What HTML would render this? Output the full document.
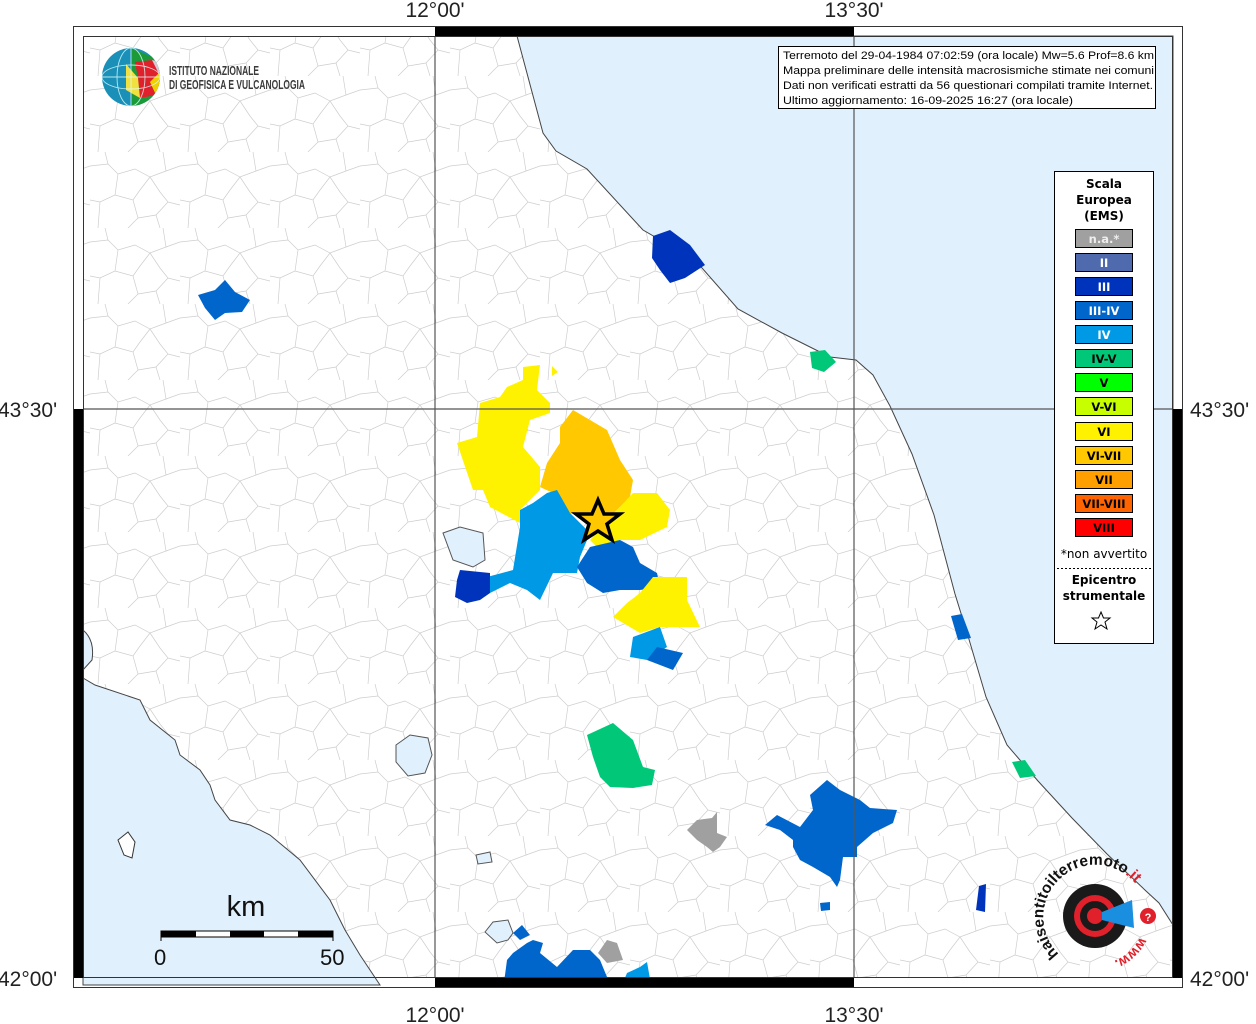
<!DOCTYPE html>
<html><head><meta charset="utf-8"><style>
html,body{margin:0;padding:0;background:#fff;width:1256px;height:1024px;overflow:hidden}
svg{display:block}
.dv{font-family:"DejaVu Sans","Liberation Sans",sans-serif}
.ls{font-family:"Liberation Sans",sans-serif}
</style></head><body>
<svg width="1256" height="1024" viewBox="0 0 1256 1024" xmlns="http://www.w3.org/2000/svg">
<defs>
<pattern id="mun" width="90" height="76" patternUnits="userSpaceOnUse">
<path d="M0 14 L18 12 L28 22 L45 17 L60 25 L76 19 L90 14 M28 22 L25 43 L10 50 L0 48 M25 43 L43 48 L50 38 L60 25 M43 48 L48 66 L38 76 M48 66 L66 63 L78 50 L90 53 M60 25 L70 40 L78 50 M18 12 L15 0 M76 19 L73 0 M10 50 L8 76 M66 63 L70 76" fill="none" stroke="#cdcdcd" stroke-width="0.7"/>
</pattern>
<clipPath id="c"><rect x="73" y="26" width="1110" height="962"/></clipPath>
</defs>
<rect x="73" y="26" width="1110" height="962" fill="#fff"/>
<g clip-path="url(#c)">
<rect x="83" y="36" width="1090" height="942" fill="url(#mun)"/>
<path d="M517 36 L543 133 L556 151 L587 169 L643 230 L695 260 L738 309 L782 333 L830 357 L856 360 L873 375 L890 406 L912 454 L934 515 L955 594 L968 636 L986 697 L1007 745 L1038 781 L1072 818 L1107 854 L1146 891 L1159 903 L1173 925 L1173 36 Z" fill="#e0f0fc" stroke="#444" stroke-width="1"/>
<path d="M83 678 L95 685 L140 700 L150 720 L175 740 L180 755 L200 770 L210 785 L215 800 L230 820 L250 825 L270 835 L300 860 L330 900 L345 930 L360 955 L380 985 L83 985 Z" fill="#e0f0fc" stroke="#444" stroke-width="1"/>
<path d="M83 630 Q95 640 92 660 L83 670Z" fill="#e0f0fc" stroke="#444"/>
<path d="M118 840 L128 832 L135 842 L132 858 L124 855 Z" fill="#fff" stroke="#333"/>
<path d="M396 745 L410 735 L428 738 L432 755 L425 773 L408 776 L396 762 Z" fill="#e0f0fc" stroke="#555"/>
<path d="M443 533 L460 527 L483 533 L485 560 L473 567 L453 560 Z" fill="#e0f0fc" stroke="#555"/>
<path d="M485 932 L493 922 L508 920 L513 933 L508 940 L497 943 Z" fill="#e0f0fc" stroke="#555"/>
<path d="M476 855 L490 852 L492 862 L478 864Z" fill="#e0f0fc" stroke="#555"/>
<path d="M523 367 L540 365 L537 390 L550 403 L550 413 L530 420 L523 447 L540 467 L540 490 L520 510 L520 523 L490 507 L483 490 L473 490 L457 443 L477 437 L480 403 L500 397 L507 387 L523 380 Z M552 366 L558 372 L552 376Z" fill="#fff200"/>
<path d="M573 410 L607 430 L620 460 L633 480 L630 497 L620 507 L610 517 L597 517 L567 513 L553 493 L540 487 L547 463 L560 443 L560 427 Z" fill="#ffc800"/>
<path d="M633 493 L657 493 L670 510 L667 527 L640 540 L620 540 L600 550 L590 540 L610 517 L620 507 Z" fill="#fff200"/>
<path d="M557 490 L570 513 L590 533 L580 557 L577 573 L553 573 L540 600 L527 590 L510 583 L490 593 L487 577 L513 570 L520 527 L520 510 L533 503 L547 493 Z" fill="#0099e6"/>
<path d="M590 547 L620 540 L633 547 L640 563 L657 573 L660 587 L640 590 L620 590 L603 593 L587 583 L577 567 Z" fill="#0066cc"/>
<path d="M460 570 L490 573 L490 593 L480 600 L467 603 L455 597 L457 580 Z" fill="#0033bb"/>
<path d="M653 577 L687 577 L687 600 L700 627 L660 627 L640 633 L613 617 L627 603 L640 593 Z" fill="#fff200"/>
<path d="M633 637 L660 627 L667 647 L647 660 L630 657 Z" fill="#0099e6"/>
<path d="M657 647 L683 653 L673 670 L647 660 Z" fill="#0066cc"/>
<path d="M653 236 L670 230 L690 245 L705 265 L685 278 L670 283 L660 270 L652 258 Z" fill="#0033bb"/>
<path d="M810 352 L825 350 L836 362 L824 372 L812 368 Z" fill="#00c878"/>
<path d="M951 616 L962 614 L971 638 L958 640 Z" fill="#0066cc"/>
<path d="M1012 762 L1025 760 L1036 776 L1020 778 Z" fill="#00c878"/>
<path d="M979 886 L986 884 L985 912 L976 910 Z" fill="#0033bb"/>
<path d="M198 295 L215 290 L225 280 L235 292 L250 300 L242 312 L225 313 L215 320 L205 308 Z" fill="#0066cc"/>
<path d="M587 735 L613 723 L633 740 L643 767 L655 770 L652 785 L633 788 L610 787 L600 777 L593 757 Z" fill="#00c878"/>
<path d="M687 830 L697 820 L712 818 L717 812 L717 833 L727 837 L720 847 L713 852 L707 847 L697 840 Z" fill="#a0a0a0"/>
<path d="M765 825 L777 815 L800 827 L813 810 L810 795 L827 780 L840 790 L860 800 L870 808 L897 810 L893 823 L873 833 L857 847 L857 857 L843 857 L840 880 L837 887 L830 877 L813 867 L800 860 L793 847 L793 840 L780 830 Z" fill="#0066cc"/>
<path d="M820 903 L830 902 L830 910 L821 911Z" fill="#0066cc"/>
<path d="M503 990 L507 960 L513 953 L527 943 L533 940 L543 943 L540 953 L557 967 L573 950 L590 950 L600 960 L607 977 L607 990 Z M513 933 L522 925 L530 935 L520 940Z" fill="#0066cc"/>
<path d="M598 953 L607 940 L617 943 L623 960 L607 963 Z" fill="#a0a0a0"/>
<path d="M620 990 L627 973 L640 967 L647 962 L652 990 Z" fill="#0099e6"/>
<path d="M598 500 L604 514 L620 514 L607 524 L612 540 L598 531 L584 540 L589 524 L576 514 L592 514 Z" fill="#ffc800" stroke="#000" stroke-width="3.5"/>
</g>
<g stroke="#555" stroke-width="1.2">
<line x1="435" y1="36" x2="435" y2="978"/><line x1="854" y1="36" x2="854" y2="978"/>
<line x1="83" y1="409" x2="1173" y2="409"/>
</g>
<rect x="435" y="26" width="419" height="10" fill="#000"/>
<rect x="435" y="978" width="419" height="10" fill="#000"/>
<rect x="73" y="409" width="10" height="569" fill="#000"/>
<rect x="1173" y="409" width="10" height="569" fill="#000"/>
<rect x="73.5" y="26.5" width="1109" height="961" fill="none" stroke="#333"/>
<rect x="83.5" y="36.5" width="1089" height="941" fill="none" stroke="#333"/>
<g class="ls" font-size="21" fill="#222">
<text x="435" y="17" text-anchor="middle">12°00'</text>
<text x="854" y="17" text-anchor="middle">13°30'</text>
<text x="435" y="1022" text-anchor="middle">12°00'</text>
<text x="854" y="1022" text-anchor="middle">13°30'</text>
<text x="-2" y="417">43°30'</text>
<text x="1190" y="417">43°30'</text>
<text x="-2" y="986">42°00'</text>
<text x="1190" y="986">42°00'</text>
</g>
<rect x="778.5" y="46.5" width="377" height="62" fill="#fff" stroke="#000"/>
<g class="ls" font-size="11.2" fill="#000">
<text x="783" y="59" textLength="371" lengthAdjust="spacingAndGlyphs">Terremoto del 29-04-1984 07:02:59 (ora locale) Mw=5.6 Prof=8.6 km</text>
<text x="783" y="74" textLength="371" lengthAdjust="spacingAndGlyphs">Mappa preliminare delle intensità macrosismiche stimate nei comuni</text>
<text x="783" y="89" textLength="370" lengthAdjust="spacingAndGlyphs">Dati non verificati estratti da 56 questionari compilati tramite Internet.</text>
<text x="783" y="104" textLength="290" lengthAdjust="spacingAndGlyphs">Ultimo aggiornamento: 16-09-2025 16:27 (ora locale)</text>
</g>
<rect x="1054.5" y="171.5" width="99" height="472" fill="#fff" stroke="#000"/>
<g class="dv" font-size="12" font-weight="bold" text-anchor="middle" fill="#000">
<text x="1104" y="188">Scala</text><text x="1104" y="204">Europea</text><text x="1104" y="220">(EMS)</text>
</g>
<g stroke="#000" stroke-width="1">
<rect x="1075.5" y="229.5" width="57" height="18" fill="#a0a0a0"/>
<rect x="1075.5" y="253.5" width="57" height="18" fill="#4f6aad"/>
<rect x="1075.5" y="277.5" width="57" height="18" fill="#0033bb"/>
<rect x="1075.5" y="301.5" width="57" height="18" fill="#0066cc"/>
<rect x="1075.5" y="325.5" width="57" height="18" fill="#0099e6"/>
<rect x="1075.5" y="349.5" width="57" height="18" fill="#00c878"/>
<rect x="1075.5" y="373.5" width="57" height="18" fill="#00ff00"/>
<rect x="1075.5" y="397.5" width="57" height="18" fill="#c8ff00"/>
<rect x="1075.5" y="422.5" width="57" height="18" fill="#fff200"/>
<rect x="1075.5" y="446.5" width="57" height="18" fill="#ffc800"/>
<rect x="1075.5" y="470.5" width="57" height="18" fill="#ffa000"/>
<rect x="1075.5" y="494.5" width="57" height="18" fill="#ff6400"/>
<rect x="1075.5" y="518.5" width="57" height="18" fill="#ff0000"/>
</g>
<g class="dv" font-size="11.5" font-weight="bold" text-anchor="middle">
<text x="1104" y="243" fill="#eee">n.a.*</text>
<text x="1104" y="267" fill="#fff">II</text>
<text x="1104" y="291" fill="#fff">III</text>
<text x="1104" y="315" fill="#fff">III-IV</text>
<text x="1104" y="339" fill="#fff">IV</text>
<text x="1104" y="363" fill="#000">IV-V</text>
<text x="1104" y="387" fill="#000">V</text>
<text x="1104" y="411" fill="#000">V-VI</text>
<text x="1104" y="436" fill="#000">VI</text>
<text x="1104" y="460" fill="#000">VI-VII</text>
<text x="1104" y="484" fill="#000">VII</text>
<text x="1104" y="508" fill="#000">VII-VIII</text>
<text x="1104" y="532" fill="#000">VIII</text>
</g>
<text x="1104" y="558" class="dv" font-size="12" text-anchor="middle">*non avvertito</text>
<line x1="1057" y1="568.5" x2="1151" y2="568.5" stroke="#000" stroke-dasharray="2,2"/>
<g class="dv" font-size="12" font-weight="bold" text-anchor="middle"><text x="1104" y="584">Epicentro</text><text x="1104" y="600">strumentale</text></g>
<path d="M1101 612 L1103.5 618 L1110 618 L1105 622 L1107 629 L1101 625 L1095 629 L1097 622 L1092 618 L1098.5 618 Z" fill="#fff" stroke="#000" stroke-width="1"/>
<text x="246" y="916" class="ls" font-size="29" text-anchor="middle" fill="#111">km</text>
<rect x="161" y="931" width="172" height="6" fill="#fff" stroke="#000"/>
<rect x="161" y="931" width="35" height="6" fill="#000"/>
<rect x="230" y="931" width="34" height="6" fill="#000"/>
<rect x="298" y="931" width="35" height="6" fill="#000"/>
<line x1="161" y1="931" x2="161" y2="941" stroke="#000"/><line x1="333" y1="931" x2="333" y2="941" stroke="#000"/>
<g class="ls" font-size="22" fill="#111"><text x="154" y="965">0</text><text x="320" y="965">50</text></g>
<defs><clipPath id="g"><circle cx="131" cy="77" r="29"/></clipPath></defs>
<g clip-path="url(#g)">
<rect x="100" y="46" width="62" height="62" fill="#1a8fb8"/>
<path d="M131 48 L160 60 L162 108 L131 108 Z" fill="#1c9a3a"/>
<path d="M135 62 L152 60 L160 72 L150 82 L138 78 Z" fill="#e0202a"/>
<path d="M138 78 L150 82 L156 95 L140 98 Z" fill="#e0202a"/>
<path d="M150 82 L160 72 L162 90 L156 95Z" fill="#f0d000"/>
<path d="M126 64 L138 78 L140 98 L126 90 Z" fill="#f0e040"/>
<path d="M152 60 L160 62 L162 80 Z" fill="#d8c8d8"/>
<g fill="none" stroke="#dff" stroke-width="0.9" opacity="0.8">
<ellipse cx="131" cy="77" rx="14" ry="29"/><ellipse cx="131" cy="77" rx="29" ry="12"/><line x1="102" y1="77" x2="160" y2="77"/><line x1="131" y1="48" x2="131" y2="106"/>
</g>
</g>
<g class="ls" font-size="12.5" font-weight="bold" fill="#3a3a3a">
<text x="169" y="75" textLength="90" lengthAdjust="spacingAndGlyphs">ISTITUTO NAZIONALE</text>
<text x="169" y="89" textLength="136" lengthAdjust="spacingAndGlyphs">DI GEOFISICA E VULCANOLOGIA</text>
</g>
<defs>
<path id="arc" d="M1059 954 A52 52 0 1 1 1143 896"/>
<path id="arc2" d="M1140 937 A48 48 0 0 1 1098 964"/>
</defs>
<circle cx="1095" cy="916" r="32" fill="#1a1a1a"/>
<circle cx="1095" cy="916" r="21" fill="#e0202a"/>
<circle cx="1095" cy="916" r="15" fill="#1a1a1a"/>
<circle cx="1095" cy="916" r="8" fill="#e0202a"/>
<path d="M1102 912 L1132 900 L1134 928 L1102 920 Z" fill="#1a8fe0"/>
<circle cx="1148" cy="916" r="8" fill="#e0202a"/>
<text x="1148" y="921" class="ls" font-size="11" font-weight="bold" fill="#fff" text-anchor="middle">?</text>
<text class="ls" font-size="15.5" font-weight="bold" fill="#111"><textPath href="#arc">haisentitoilterremoto<tspan fill="#e0202a">.it</tspan></textPath></text>
<text class="ls" font-size="14" font-weight="bold" fill="#e0202a"><textPath href="#arc2">www.</textPath></text>
</svg>
</body></html>
